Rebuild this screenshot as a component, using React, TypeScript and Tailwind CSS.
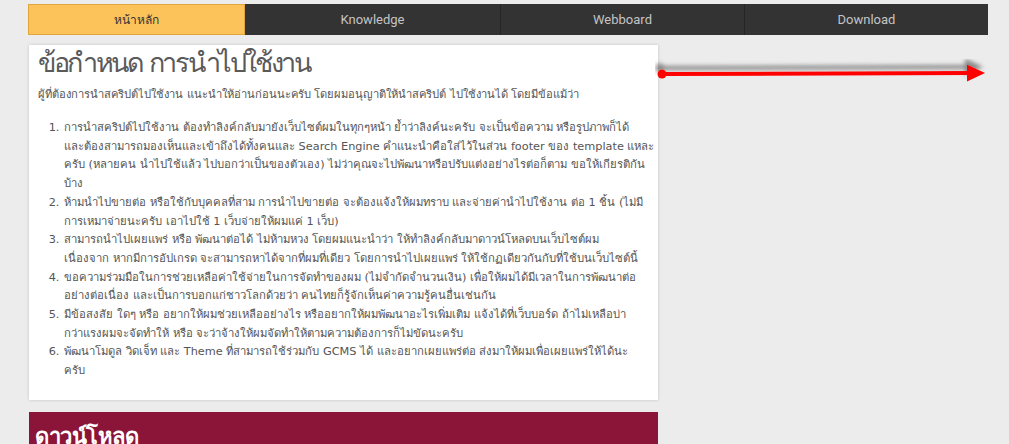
import React from "react";

const items: string[][] = [
  [
    "การนำสคริปต์ไปใช้งาน ต้องทำลิงค์กลับมายังเว็บไซต์ผมในทุกๆหน้า ย้ำว่าลิงค์นะครับ จะเป็นข้อความ หรือรูปภาพก็ได้",
    "และต้องสามารถมองเห็นและเข้าถึงได้ทั้งคนและ Search Engine คำแนะนำคือใส่ไว้ในส่วน footer ของ template แหละ",
    "ครับ (หลายคน นำไปใช้แล้ว ไปบอกว่าเป็นของตัวเอง) ไม่ว่าคุณจะไปพัฒนาหรือปรับแต่งอย่างไรต่อก็ตาม ขอให้เกียรติกัน",
    "บ้าง",
  ],
  [
    "ห้ามนำไปขายต่อ หรือใช้กับบุคคลที่สาม การนำไปขายต่อ จะต้องแจ้งให้ผมทราบ และจ่ายค่านำไปใช้งาน ต่อ 1 ชิ้น (ไม่มี",
    "การเหมาจ่ายนะครับ เอาไปใช้ 1 เว็บจ่ายให้ผมแค่ 1 เว็บ)",
  ],
  [
    "สามารถนำไปเผยแพร่ หรือ พัฒนาต่อได้ ไม่ห้ามหวง โดยผมแนะนำว่า ให้ทำลิงค์กลับมาดาวน์โหลดบนเว็บไซต์ผม",
    "เนื่องจาก หากมีการอัปเกรด จะสามารถหาได้จากที่ผมที่เดียว โดยการนำไปเผยแพร่ ให้ใช้กฏเดียวกันกับที่ใช้บนเว็บไซต์นี้",
  ],
  [
    "ขอความร่วมมือในการช่วยเหลือค่าใช้จ่ายในการจัดทำของผม (ไม่จำกัดจำนวนเงิน) เพื่อให้ผมได้มีเวลาในการพัฒนาต่อ",
    "อย่างต่อเนื่อง และเป็นการบอกแก่ชาวโลกด้วยว่า คนไทยก็รู้จักเห็นค่าความรู้คนอื่นเช่นกัน",
  ],
  [
    "มีข้อสงสัย ใดๆ หรือ อยากให้ผมช่วยเหลืออย่างไร หรืออยากให้ผมพัฒนาอะไรเพิ่มเติม แจ้งได้ที่เว็บบอร์ด ถ้าไม่เหลือบ่า",
    "กว่าแรงผมจะจัดทำให้ หรือ จะว่าจ้างให้ผมจัดทำให้ตามความต้องการก็ไม่ขัดนะครับ",
  ],
  [
    "พัฒนาโมดูล วิดเจ็ท และ Theme ที่สามารถใช้ร่วมกับ GCMS ได้ และอยากเผยแพร่ต่อ ส่งมาให้ผมเพื่อเผยแพร่ให้ได้นะ",
    "ครับ",
  ],
];

export default function App() {
  return (
    <div className="min-h-[444px] bg-[#ececec] overflow-hidden font-['Tahoma','DejaVu_Sans','Noto_Sans',sans-serif]">
      <div className="ml-[28px] w-[960px] pt-[4px]">
        <nav className="flex h-[31px] text-[13px] font-['Roboto','Liberation_Sans',sans-serif]">
          <a className="w-[217px] flex items-center justify-center bg-[#fdc35b] border border-[#e3a43c] text-[#333] font-['Tahoma','DejaVu_Sans',sans-serif] text-[12px]">หน้าหลัก</a>
          <a className="w-[256px] flex items-center justify-center bg-[#333333] text-[#c4c4c4] border-r border-[#262626]">Knowledge</a>
          <a className="w-[244px] flex items-center justify-center bg-[#333333] text-[#c4c4c4] border-r border-[#262626]">Webboard</a>
          <a className="flex-1 flex items-center justify-center bg-[#333333] text-[#c4c4c4]">Download</a>
        </nav>
        <div className="flex items-start mt-[10px]">
          <div className="ml-[1px] w-[629px] flex flex-col">
            <div className="h-[355px] bg-white shadow-[0_0_3px_rgba(0,0,0,0.18)] pl-[9px] pr-[6px] pt-[2px] text-[#555]">
              <h1 className="text-[27px] leading-[32px] tracking-[-2.4px] text-[#5a5a5a]">ข้อกำหนด การนำไปใช้งาน</h1>
              <p className="mt-[6px] text-[11.2px] leading-[19px]">ผู้ที่ต้องการนำสคริปต์ไปใช้งาน แนะนำให้อ่านก่อนนะครับ โดยผมอนุญาติให้นำสคริปต์ ไปใช้งานได้ โดยมีข้อแม้ว่า</p>
              <ol className="mt-[15px] list-decimal pl-[25px] text-[11.3px] leading-[18.7px]">
                {items.map((lines, i) => (
                  <li key={i} className="pl-[1px] whitespace-nowrap">
                    {lines.map((l, j) => (
                      <React.Fragment key={j}>
                        {j > 0 && <br />}
                        {l}
                      </React.Fragment>
                    ))}
                  </li>
                ))}
              </ol>
            </div>
            <div className="mt-[12px] h-[40px] bg-[#8a1538] pl-[6px] pt-[10px]">
              <h2 className="text-white text-[22px] font-bold leading-[30px] tracking-[-0.5px]">ดาวน์โหลด</h2>
            </div>
          </div>
          <svg width="334" height="30" viewBox="0 0 334 30" className="mt-[14px] -ml-[3px] shrink-0">
            <defs>
              <filter id="sh" x="-5%" y="-100%" width="110%" height="300%">
                <feDropShadow dx="-2" dy="-6" stdDeviation="2" floodColor="#666" floodOpacity="0.75" />
              </filter>
            </defs>
            <g filter="url(#sh)">
              <line x1="7" y1="15" x2="320" y2="14" stroke="#ff0000" strokeWidth="4" />
              <circle cx="7" cy="15" r="4.5" fill="#ff0000" />
              <polygon points="312,5.5 330,14 312,22.5" fill="#ff0000" />
            </g>
          </svg>
        </div>
      </div>
    </div>
  );
}
